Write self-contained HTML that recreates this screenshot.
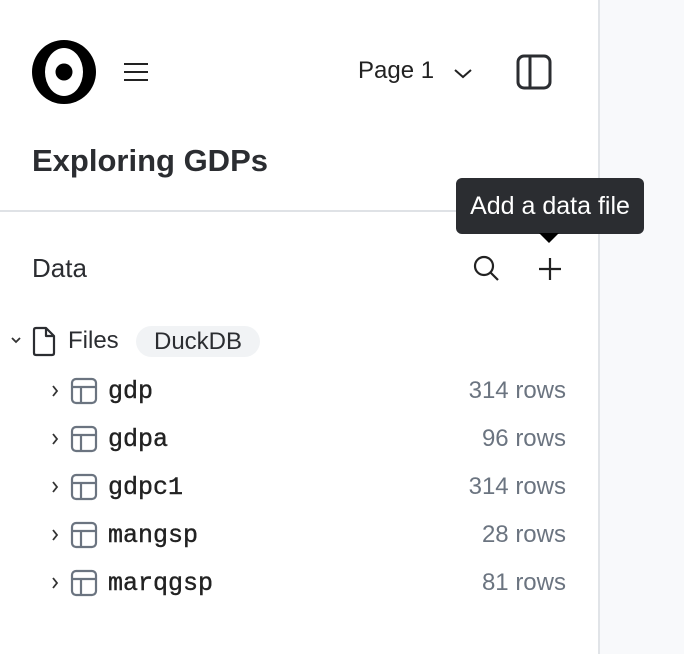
<!DOCTYPE html>
<html><head><meta charset="utf-8"><style>
body{margin:0;width:684px;height:654px;background:#fff;position:relative;overflow:hidden;font-family:"Liberation Sans",sans-serif;color:#2b2d31}
.a{position:absolute;white-space:nowrap}
.right{position:absolute;left:598px;top:0;width:86px;height:654px;background:#f8f9fb;border-left:2px solid #e1e4e8}
.name{font-family:"Liberation Mono",monospace;font-size:25px;color:#222;-webkit-text-stroke:0.4px #222}
.rows{font-size:24px;color:#6b7480;right:118px}
</style></head><body>
<div class="right"></div>
<svg class="a" style="left:32px;top:40px" width="64" height="64"><circle cx="32" cy="32" r="32" fill="#000"/><ellipse cx="32" cy="32" rx="19" ry="24" fill="#fff"/><circle cx="32" cy="32" r="8.5" fill="#000"/></svg>
<svg class="a" style="left:124px;top:62px" width="24" height="20"><path d="M0 2H24M0 10H24M0 18H24" stroke="#222" stroke-width="2"/></svg>
<div class="a" style="left:358px;top:57px;font-size:24px;color:#222">Page 1</div>
<svg class="a" style="left:453px;top:68px" width="20" height="12"><path d="M2 2L10 9L18 2" fill="none" stroke="#222" stroke-width="2"/></svg>
<svg class="a" style="left:516px;top:54px" width="36" height="36"><rect x="2" y="2" width="32" height="32" rx="6" fill="none" stroke="#2b2d31" stroke-width="3"/><path d="M14 2V34" stroke="#2b2d31" stroke-width="3"/></svg>
<div class="a" style="left:32px;top:143px;font-size:31px;font-weight:bold;color:#2b2d31">Exploring GDPs</div>
<div class="a" style="left:0;top:210px;width:598px;height:2px;background:#dfe2e6"></div>
<div class="a" style="left:456px;top:178px;width:188px;height:56px;background:#2b2d31;border-radius:6px;color:#fff;font-size:25px;line-height:56px;text-align:center">Add a data file</div>
<div class="a" style="left:539px;top:233px;width:0;height:0;border-left:10px solid transparent;border-right:10px solid transparent;border-top:10px solid #000"></div>
<div class="a" style="left:32px;top:253px;font-size:26px;color:#2b2d31">Data</div>
<svg class="a" style="left:472px;top:254px" width="30" height="30"><circle cx="12" cy="12" r="9" fill="none" stroke="#222" stroke-width="2.2"/><path d="M18.5 18.5L26 26" stroke="#222" stroke-width="2.2"/></svg>
<svg class="a" style="left:538px;top:257px" width="24" height="24"><path d="M12 1V23M1 12H23" stroke="#222" stroke-width="2.2"/></svg>
<svg class="a" style="left:10px;top:336px" width="12" height="10"><path d="M2 2L6 6L10 2" fill="none" stroke="#333" stroke-width="1.8"/></svg>
<svg class="a" style="left:31px;top:326px" width="26" height="32"><path d="M3 4Q3 2 5 2H15L23 10V27Q23 29 21 29H5Q3 29 3 27Z M15 2V10H23" fill="none" stroke="#2b2d31" stroke-width="2.2" stroke-linejoin="round"/></svg>
<div class="a" style="left:68px;top:327px;font-size:24px;color:#2b2d31">Files</div>
<div class="a" style="left:136px;top:326px;width:124px;height:31px;background:#f1f3f5;border-radius:16px;font-size:24px;line-height:31px;text-align:center;color:#2b2d31">DuckDB</div>
<svg class="a" style="left:50px;top:383px" width="10" height="220">
<g fill="none" stroke="#333" stroke-width="1.8"><path d="M3 3L7 8L3 13"/><path d="M3 51L7 56L3 61"/><path d="M3 99L7 104L3 109"/><path d="M3 147L7 152L3 157"/><path d="M3 195L7 200L3 205"/></g></svg>
<svg class="a" style="left:70px;top:376px" width="28" height="224">
<g fill="none" stroke="#6b7480" stroke-width="2.2"><rect x="2" y="3" width="24" height="24" rx="4"/><path d="M2 11H26M11 11V27"/>
<rect x="2" y="51" width="24" height="24" rx="4"/><path d="M2 59H26M11 59V75"/>
<rect x="2" y="99" width="24" height="24" rx="4"/><path d="M2 107H26M11 107V123"/>
<rect x="2" y="147" width="24" height="24" rx="4"/><path d="M2 155H26M11 155V171"/>
<rect x="2" y="195" width="24" height="24" rx="4"/><path d="M2 203H26M11 203V219"/></g></svg>
<div class="a name" style="left:108px;top:377px">gdp</div>
<div class="a name" style="left:108px;top:425px">gdpa</div>
<div class="a name" style="left:108px;top:473px">gdpc1</div>
<div class="a name" style="left:108px;top:521px">mangsp</div>
<div class="a name" style="left:108px;top:569px">marqgsp</div>
<div class="a rows" style="top:377px">314 rows</div>
<div class="a rows" style="top:425px">96 rows</div>
<div class="a rows" style="top:473px">314 rows</div>
<div class="a rows" style="top:521px">28 rows</div>
<div class="a rows" style="top:569px">81 rows</div>
</body></html>
